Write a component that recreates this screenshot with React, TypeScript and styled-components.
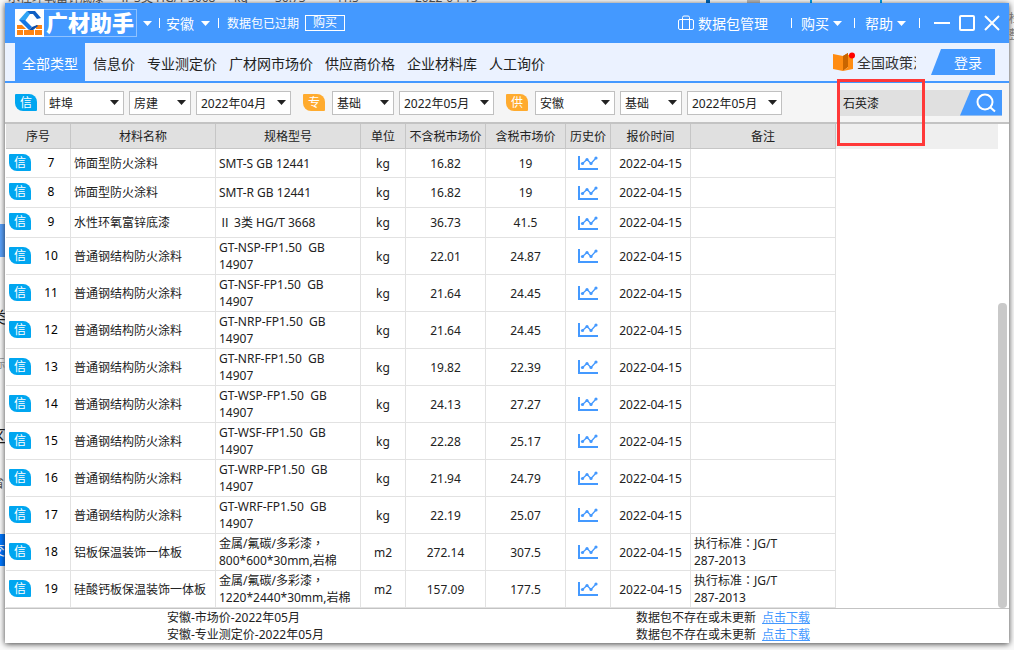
import React from 'react';
import styled, { createGlobalStyle } from 'styled-components';

const Global = createGlobalStyle`
  * { box-sizing: border-box; }
  body {
    margin: 0;
    background: #f1f3f5;
    color: #222;
    font: 12px/17px "Noto Sans", "Noto Sans CJK SC", sans-serif;
  }
  button, select, input { font: inherit; color: inherit; margin: 0; padding: 0; border: 0; background: none; }
  button { cursor: pointer; white-space: nowrap; }
`;

const Page = styled.div`
  position: relative;
  display: flex;
  min-height: 100vh;
  padding: 3px 5px 7px;
  overflow: hidden;
`;

const Backdrop = styled.div`
  position: absolute;
  inset: 0;
  overflow: hidden;
  background: #fafafa;
  color: #555;
`;

const Behind = styled.span<{ $x: number; $y: number; $size?: number; $color?: string }>`
  position: absolute;
  left: ${(p) => p.$x}px;
  top: ${(p) => p.$y}px;
  font-size: ${(p) => p.$size ?? 12}px;
  color: ${(p) => p.$color ?? '#555'};
  white-space: nowrap;
`;

const Block = styled.span<{ $x: number; $y: number; $w: number; $h: number; $color: string }>`
  position: absolute;
  left: ${(p) => p.$x}px;
  top: ${(p) => p.$y}px;
  width: ${(p) => p.$w}px;
  height: ${(p) => p.$h}px;
  background: ${(p) => p.$color};
`;

const Window = styled.main`
  position: relative;
  flex: 1;
  min-width: 0;
  display: flex;
  flex-direction: column;
  background: #fff;
  box-shadow: 0 1px 6px rgba(0, 0, 0, 0.75);
`;

const TitleBar = styled.header`
  display: flex;
  align-items: center;
  height: 40px;
  padding: 0 9px 0 10px;
  background: #4499ff;
  color: #fff;
  font-size: 14px;
`;

const Brand = styled.div`
  display: flex;
  align-items: center;
  width: 122px;
  height: 28px;
  border: 1px solid #8fc2ff;
  font-weight: 900;
  font-size: 22px;
  line-height: 24px;
  white-space: nowrap;
  svg { flex: none; margin: -1px 2px -1px -1px; }
`;

const BrandName = styled.span`
  padding-bottom: 2px;
`;

const MenuButton = styled.button`
  display: flex;
  align-items: center;
  gap: 4px;
`;

const Region = styled(MenuButton)`
  gap: 7px;
`;

const BrandMenu = styled(MenuButton)`
  margin-left: 6px;
`;

const Rule = styled.span<{ $l?: number; $r?: number }>`
  width: 1px;
  height: 10px;
  margin: 0 ${(p) => p.$r ?? 9}px 0 ${(p) => p.$l ?? 9}px;
  background: #fff;
`;

const Expired = styled.span`
  font-size: 12px;
  margin-right: 6px;
`;

const BuyButton = styled.button`
  width: 40px;
  height: 16px;
  border: 1px solid #fff;
  font-size: 12px;
  line-height: 14px;
`;

const Spacer = styled.span`
  flex: 1;
`;

const WindowButtons = styled.div`
  display: flex;
  gap: 9px;
  margin-left: 5px;
  button { display: flex; }
`;

const TabBar = styled.nav`
  display: flex;
  align-items: center;
  height: 40px;
  padding: 0 14px 0 10px;
  background: #ebf2ff;
  border-bottom: 2px solid #4499ff;
`;

const Tab = styled.button<{ $active?: boolean }>`
  align-self: stretch;
  padding: 2px ${(p) => (p.$active ? 7 : 6)}px 0;
  margin-right: ${(p) => (p.$active ? 2 : 0)}px;
  font-size: 14px;
  color: ${(p) => (p.$active ? '#fff' : '#222')};
  background: ${(p) => (p.$active ? '#4499ff' : 'transparent')};
`;

const Policy = styled.a`
  display: flex;
  align-items: center;
  gap: 2px;
  width: 83px;
  overflow: hidden;
  white-space: nowrap;
  font-size: 14px;
  color: #333;
  text-decoration: none;
  svg { flex: none; }
`;

const Login = styled.button`
  width: 64px;
  height: 26px;
  margin-left: 15px;
  padding-left: 10px;
  background: #4499ff;
  clip-path: polygon(10px 0, 100% 0, 100% 100%, 0 100%);
  color: #fff;
  font-size: 14px;
`;

const FilterBar = styled.form`
  display: flex;
  align-items: center;
  gap: 12px;
  height: 41px;
  padding: 0 7px 0 10px;
  background: #f5f5f5;
  border-bottom: 2px solid #c3c3c3;
`;

const FilterGroup = styled.fieldset`
  display: flex;
  align-items: center;
  gap: 5px;
  margin: 0;
  padding: 0;
  border: 0;
`;

const Badge = styled.span<{ $color?: string }>`
  flex: none;
  display: inline-block;
  width: 22px;
  height: 17px;
  border-radius: 1px 8px 1px 8px;
  background: ${(p) => p.$color ?? '#00a6f0'};
  color: #fff;
  font-size: 12px;
  line-height: 18px;
  text-align: center;
`;

const FilterBadge = styled(Badge)`
  margin-right: 2px;
`;

const SelectBox = styled.span<{ $w: number }>`
  display: grid;
  align-items: center;
  width: ${(p) => p.$w}px;
  height: 24px;
  border: 1px solid #c0c0c0;
  background: #fff;
  select, svg { grid-area: 1 / 1; }
  select { appearance: none; width: 100%; height: 22px; padding: 2px 18px 0 4px; outline: 0; }
  svg { justify-self: end; margin-right: 4px; pointer-events: none; }
`;

const Search = styled.div`
  position: relative;
  display: flex;
  flex: none;
  width: 164px;
  height: 26px;
  margin-left: auto;
  background: #e0e0e0;
  input { flex: 1; min-width: 0; padding: 2px 0 0 5px; outline: 0; }
`;

const SearchButton = styled.button`
  display: flex;
  align-items: center;
  width: 42px;
  padding-left: 16px;
  background: #4499ff;
  clip-path: polygon(11px 0, 100% 0, 100% 100%, 0 100%);
  color: #fff;
`;

const Highlight = styled.span`
  position: absolute;
  left: -1px;
  top: -11px;
  width: 88px;
  height: 67px;
  border: 3px solid #ff3838;
  pointer-events: none;
`;

const Content = styled.section`
  display: flex;
  flex: 1;
  padding: 0 2px 0 1px;
  border-bottom: 1px solid #c3c3c3;
`;

const Table = styled.table`
  flex: none;
  width: 830px;
  table-layout: fixed;
  border-collapse: separate;
  border-spacing: 0;
  th {
    height: 25px;
    padding: 0;
    border-right: 1px solid #c6c6c6;
    border-bottom: 1px solid #c6c6c6;
    background: #e0e0e0;
    font-weight: 400;
  }
`;

const Row = styled.tr<{ $height: number }>`
  height: ${(p) => p.$height}px;
`;

const Cell = styled.td<{ $left?: boolean }>`
  padding: 0 3px;
  border-right: 1px solid #e2e2e2;
  border-bottom: 1px solid #e2e2e2;
  text-align: ${(p) => (p.$left ? 'left' : 'center')};
  white-space: pre-line;
  svg { display: block; margin: 0 auto; }
`;

/* Full-width punctuation sits in the middle of its cell. */
const Mark = styled.span`
  font-family: "Noto Sans CJK TC", sans-serif;
  line-height: 1;
`;

const Index = styled.div`
  display: flex;
  align-items: center;
  padding-bottom: 2px;
  color: #000;
  span:last-child { flex: 1; padding-left: 4px; }
`;

const Filler = styled.div`
  flex: 1;
  height: 25px;
  background: #efefef;
`;

const Scrollbar = styled.div`
  display: flex;
  flex-direction: column;
  justify-content: flex-end;
  width: 9px;
`;

const Thumb = styled.div`
  height: 63%;
  border-radius: 4px;
  background: #c9c9c9;
`;

const Footer = styled.footer`
  display: grid;
  grid-template-columns: 469px auto;
  justify-content: start;
  padding-left: 162px;
  a { margin-left: 6px; color: #4499ff; text-decoration: underline; }
`;

const Caret = ({ dark }: { dark?: boolean }) => (
  <svg width="9" height="5" viewBox="0 0 9 5" aria-hidden="true">
    <path d="M0 0h9L4.500 5z" fill={dark ? '#222' : '#fff'} />
  </svg>
);

const Logo = () => (
  <svg width="29" height="28" viewBox="0 0 29 28" aria-hidden="true">
    <path d="M0 0h29v28H0z" fill="#fff" />
    <path d="M2 16h5l4 4H2zM21 16h6v4h-6zM2 21h6v5H2zM9 21h10v5H9zM20 21h7v5h-7z" fill="#ff8412" />
    <path d="M10 16l4-4 5 4-4 4z" fill="#fff" />
    <path d="M12 2h8l6 7-4 1-4-5h-4z" fill="#0f5fc4" />
    <path d="M12 2l3 3-5 7-6-1z" fill="#2fa4f5" />
    <path d="M4 11l6 0 7 7-3 3z" fill="#1677e5" />
    <path d="M14 21l3-3 5-2 1 1-5 4z" fill="#0c4ea8" />
  </svg>
);

const Briefcase = () => (
  <svg width="16" height="16" viewBox="0 0 16 16" fill="none" stroke="#fff" aria-hidden="true">
    <rect x=".5" y="4.500" width="15" height="10" rx="1.500" />
    <path d="M4.500 14V2.500q0-1.500 1.500-1.500h4q1.500 0 1.500 1.500V14" />
  </svg>
);

const Book = () => (
  <svg width="22" height="20" viewBox="0 0 22 20" aria-hidden="true">
    <path d="M0 2l10 2v15L0 17z" fill="#ff8c12" />
    <path d="M10 4l5-3v14l-5 4z" fill="#c96500" />
    <path d="M10 19l5-4V3l5-1v15z" fill="#ff8c12" />
    <path d="M10 4l5-3v13l-5 4z" fill="#c96500" />
    <circle cx="19" cy="3.500" r="3" fill="#f00" />
  </svg>
);

const Trend = () => (
  <svg width="20" height="14" viewBox="0 0 20 14" aria-hidden="true">
    <path d="M1 0v13h19" fill="none" stroke="#4499ff" strokeWidth="2" />
    <path d="M4.500 7.500L9 3.500l4 4 5-5.500" fill="none" stroke="#4499ff" strokeWidth="1.300" />
    <g fill="#4499ff">
      <circle cx="4.500" cy="7.500" r="1.600" />
      <circle cx="9" cy="3.500" r="1.600" />
      <circle cx="13" cy="7.500" r="1.600" />
      <circle cx="18" cy="2" r="1.600" />
    </g>
  </svg>
);

const Punctuated = ({ text }: { text: string }) => (
  <>{text.split(/([：，])/).map((s, i) => (i % 2 ? <Mark key={i} lang="zh-Hant">{s}</Mark> : s))}</>
);

const tabs = ['全部类型', '信息价', '专业测定价', '广材网市场价', '供应商价格', '企业材料库', '人工询价'];

const filters = [
  { mark: '信', color: '#00a6f0', fields: [['地区', '蚌埠', 80], ['专业', '房建', 62], ['期数', '2022年04月', 95]] },
  { mark: '专', color: '#ffab2e', fields: [['专业', '基础', 62], ['期数', '2022年05月', 95]] },
  { mark: '供', color: '#ffab2e', fields: [['地区', '安徽', 80], ['专业', '基础', 62], ['期数', '2022年05月', 95]] },
] as { mark: string; color: string; fields: [string, string, number][] }[];

const columns: [string, number][] = [
  ['序号', 65], ['材料名称', 145], ['规格型号', 145], ['单位', 45], ['不含税市场价', 80],
  ['含税市场价', 80], ['历史价', 45], ['报价时间', 80], ['备注', 145],
];

const steel = '普通钢结构防火涂料';
const standard = '执行标准：JG/T\n287-2013';
const rows: string[][] = [
  ['饰面型防火涂料', 'SMT-S GB 12441', 'kg', '16.82', '19', ''],
  ['饰面型防火涂料', 'SMT-R GB 12441', 'kg', '16.82', '19', ''],
  ['水性环氧富锌底漆', 'Ⅱ 3类 HG/T 3668', 'kg', '36.73', '41.5', ''],
  [steel, 'GT-NSP-FP1.50\u00a0 GB\n14907', 'kg', '22.01', '24.87', ''],
  [steel, 'GT-NSF-FP1.50\u00a0 GB\n14907', 'kg', '21.64', '24.45', ''],
  [steel, 'GT-NRP-FP1.50\u00a0 GB\n14907', 'kg', '21.64', '24.45', ''],
  [steel, 'GT-NRF-FP1.50\u00a0 GB\n14907', 'kg', '19.82', '22.39', ''],
  [steel, 'GT-WSP-FP1.50\u00a0 GB\n14907', 'kg', '24.13', '27.27', ''],
  [steel, 'GT-WSF-FP1.50\u00a0 GB\n14907', 'kg', '22.28', '25.17', ''],
  [steel, 'GT-WRP-FP1.50\u00a0 GB\n14907', 'kg', '21.94', '24.79', ''],
  [steel, 'GT-WRF-FP1.50\u00a0 GB\n14907', 'kg', '22.19', '25.07', ''],
  ['铝板保温装饰一体板', '金属/氟碳/多彩漆，\n800*600*30mm,岩棉', 'm2', '272.14', '307.5', standard],
  ['硅酸钙板保温装饰一体板', '金属/氟碳/多彩漆，\n1220*2440*30mm,岩棉', 'm2', '157.09', '177.5', standard],
];

export default function App() {
  return (
    <Page>
      <Global />
      <Backdrop aria-hidden="true">
        <Behind $x={8} $y={-11}>水性环氧富锌底漆</Behind>
        <Behind $x={119} $y={-11}>Ⅱ 3类 HG/T 3668</Behind>
        <Behind $x={234} $y={-11}>kg</Behind>
        <Behind $x={275} $y={-11}>36.73</Behind>
        <Behind $x={335} $y={-11}>41.5</Behind>
        <Behind $x={415} $y={-11}>2022-04-15</Behind>
        <Block $x={706} $y={0} $w={4} $h={3} $color="#0067b8" />
        <Block $x={747} $y={0} $w={13} $h={3} $color="#bbb" />
        <Block $x={810} $y={0} $w={2} $h={3} $color="#00a6f0" />
        <Block $x={880} $y={0} $w={2} $h={3} $color="#00a6f0" />
        <Block $x={0} $y={224} $w={5} $h={33} $color="#5aa2fb" />
        <Behind $x={-10} $y={309} $size={16} $color="#222">类</Behind>
        <Behind $x={-7} $y={355} $color="#999">标</Behind>
        <Behind $x={-10} $y={428} $size={16} $color="#222">区</Behind>
        <Behind $x={-8} $y={475} $color="#555">省</Behind>
        <Block $x={0} $y={534} $w={5} $h={32} $color="#0078ff" />
        <Behind $x={-9} $y={541} $size={14} $color="#fff">交</Behind>
        <Behind $x={1009} $y={10} $color="#888">检</Behind>
        <Behind $x={1009} $y={26} $color="#888">整</Behind>
      </Backdrop>
      <Window>
        <TitleBar>
          <Brand><Logo /><BrandName>广材助手</BrandName></Brand>
          <BrandMenu aria-label="菜单"><Caret /></BrandMenu>
          <Rule $l={7} $r={6} />
          <Region>安徽<Caret /></Region>
          <Rule $l={8} $r={8} />
          <Expired>数据包已过期</Expired>
          <BuyButton>购买</BuyButton>
          <Spacer />
          <MenuButton><Briefcase />数据包管理</MenuButton>
          <Rule $l={23} />
          <MenuButton>购买<Caret /></MenuButton>
          <Rule $l={12} $r={10} />
          <MenuButton>帮助<Caret /></MenuButton>
          <Rule $l={13} />
          <WindowButtons>
            <button aria-label="最小化"><svg width="16" height="16"><path d="M0 8h16" stroke="#fff" strokeWidth="2" /></svg></button>
            <button aria-label="最大化"><svg width="16" height="16"><rect x="1" y="1" width="14" height="14" rx="1" fill="none" stroke="#fff" strokeWidth="2" /></svg></button>
            <button aria-label="关闭"><svg width="16" height="16"><path d="M1 1l14 14M15 1L1 15" stroke="#fff" strokeWidth="2" /></svg></button>
          </WindowButtons>
        </TitleBar>
        <TabBar>
          {tabs.map((t, i) => <Tab key={t} $active={i === 0}>{t}</Tab>)}
          <Spacer />
          <Policy href="#policy"><Book />全国政策法规</Policy>
          <Login>登录</Login>
        </TabBar>
        <FilterBar onSubmit={(e) => e.preventDefault()}>
          {filters.map((g) => (
            <FilterGroup key={g.mark}>
              <FilterBadge $color={g.color}>{g.mark}</FilterBadge>
              {g.fields.map(([label, value, w]) => (
                <SelectBox key={label} $w={w}>
                  <select aria-label={g.mark + label} defaultValue={value}><option>{value}</option></select>
                  <Caret dark />
                </SelectBox>
              ))}
            </FilterGroup>
          ))}
          <Search>
            <input aria-label="搜索材料" defaultValue="石英漆" />
            <SearchButton aria-label="搜索">
              <svg width="20" height="20" viewBox="0 0 20 20" fill="none" stroke="#fff" strokeWidth="2">
                <circle cx="9" cy="9" r="7.500" /><path d="M14.500 14.500L19 18.500" />
              </svg>
            </SearchButton>
            <Highlight />
          </Search>
        </FilterBar>
        <Content>
          <Table>
            <colgroup>{columns.map(([c, w]) => <col key={c} width={w} />)}</colgroup>
            <thead><tr>{columns.map(([c]) => <th key={c} scope="col">{c}</th>)}</tr></thead>
            <tbody>
              {rows.map(([name, spec, unit, net, gross, note], i) => (
                <Row key={i} $height={i === 0 ? 29 : i < 3 ? 30 : 37}>
                  <Cell><Index><Badge>信</Badge><span>{i + 7}</span></Index></Cell>
                  <Cell $left>{name}</Cell>
                  <Cell $left><Punctuated text={spec} /></Cell>
                  <Cell>{unit}</Cell>
                  <Cell>{net}</Cell>
                  <Cell>{gross}</Cell>
                  <Cell><Trend /></Cell>
                  <Cell>2022-04-15</Cell>
                  <Cell $left><Punctuated text={note} /></Cell>
                </Row>
              ))}
            </tbody>
          </Table>
          <Filler />
          <Scrollbar><Thumb /></Scrollbar>
        </Content>
        <Footer>
          <span>安徽-市场价-2022年05月</span>
          <span>数据包不存在或未更新<a href="#market">点击下载</a></span>
          <span>安徽-专业测定价-2022年05月</span>
          <span>数据包不存在或未更新<a href="#measured">点击下载</a></span>
        </Footer>
      </Window>
    </Page>
  );
}
